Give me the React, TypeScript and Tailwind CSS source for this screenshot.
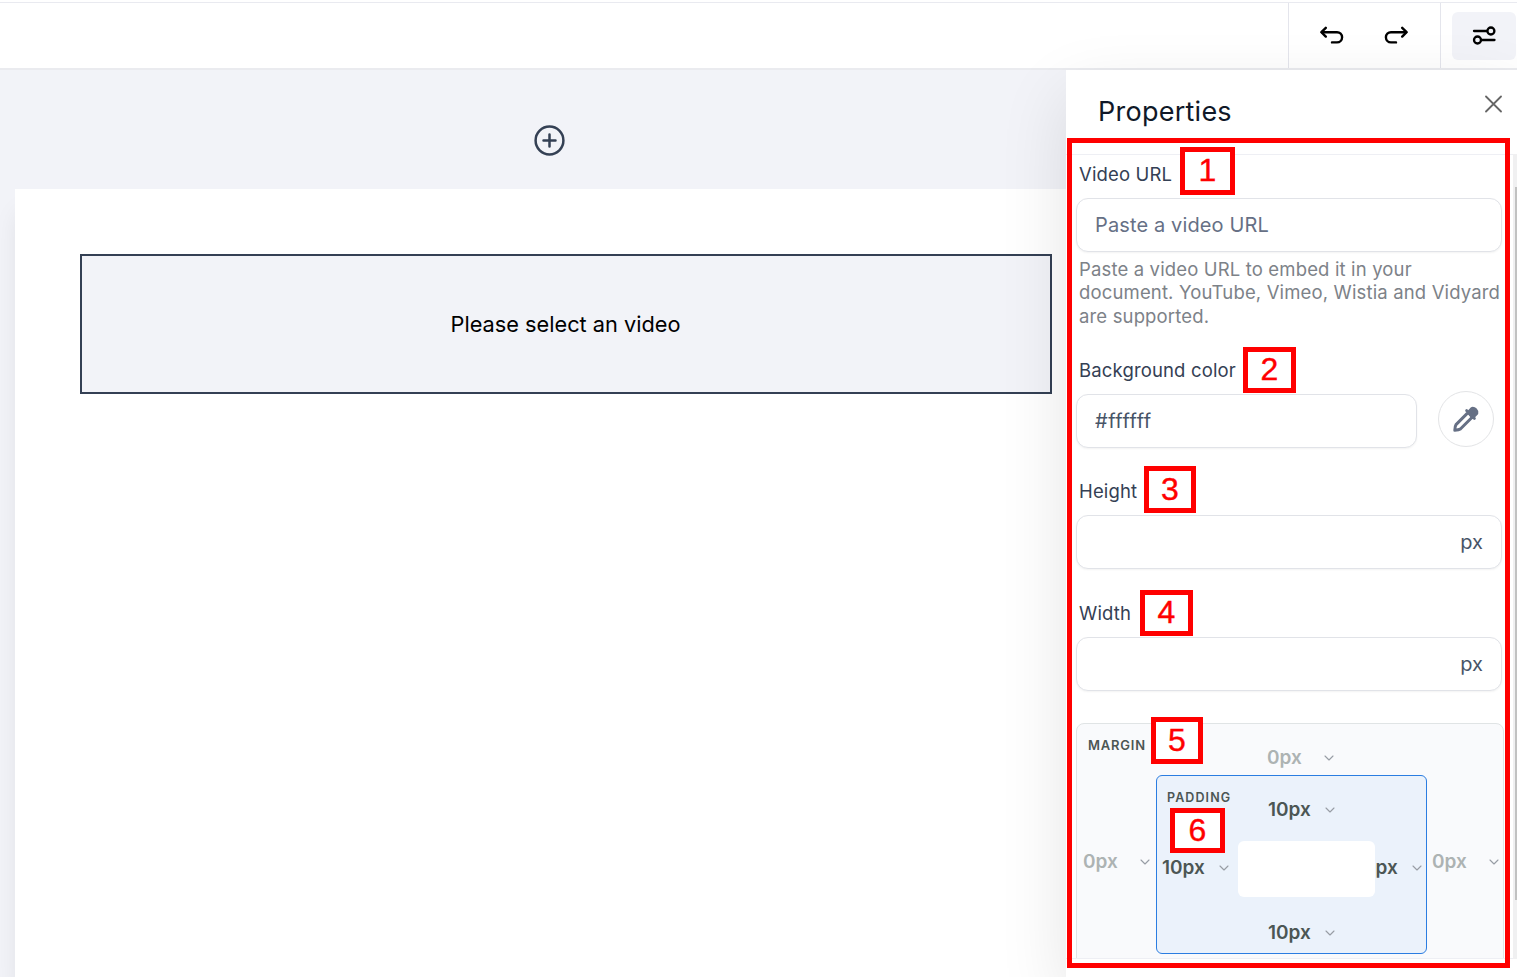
import React, { useState } from 'react';

interface Callout {
  id: number;
  box: string;
}

// Numbered callouts drawn over the properties panel
const callouts: Callout[] = [
  { id: 1, box: 'left-[1180px] top-[147px] w-[55px] h-[48px]' },
  { id: 2, box: 'left-[1243px] top-[347px] w-[53px] h-[46px]' },
  { id: 3, box: 'left-[1144px] top-[466px] w-[52px] h-[47px]' },
  { id: 4, box: 'left-[1140px] top-[590px] w-[53px] h-[46px]' },
  { id: 5, box: 'left-[1151px] top-[717px] w-[52px] h-[47px]' },
  { id: 6, box: 'left-[1170px] top-[808px] w-[55px] h-[45px]' },
];

const UndoIcon = ({ className }: { className?: string }) => (
  <svg
    viewBox="0 0 24 18"
    fill="none"
    stroke="currentColor"
    strokeWidth="2.4"
    strokeLinecap="round"
    strokeLinejoin="round"
    className={className}
  >
    <path d="M5.8 1.8 1.4 6.2 5.8 10.6" />
    <path d="M2 6.2h15a5 5 0 0 1 0 10.2H12" />
  </svg>
);

const SlidersIcon = () => (
  <svg
    width="24"
    height="20"
    viewBox="0 0 24 20"
    fill="none"
    stroke="currentColor"
    strokeWidth="2.3"
    strokeLinecap="round"
  >
    <path d="M2 5h13M9.5 14h13" />
    <circle cx="18.9" cy="5" r="3.5" />
    <circle cx="5.5" cy="14" r="3.5" />
  </svg>
);

const PipetteIcon = () => (
  <svg
    width="26"
    height="26"
    viewBox="0 0 26 26"
    fill="none"
    stroke="#667085"
    strokeWidth="3"
    strokeLinejoin="round"
    strokeLinecap="round"
  >
    <path d="M14 7.6 3 18.6Q2 20 1.8 24.2 6 24 7.4 23L18.4 12" />
    <path d="M13.6 4.6l7.8 7.8" strokeWidth="2.8" />
    <path
      d="M15.5 6.5 19 2.6a4 4 0 0 1 4.6 4.6l-4 4z"
      fill="#667085"
      strokeWidth="3.4"
    />
  </svg>
);

const Chevron = () => (
  <svg
    width="10"
    height="6"
    viewBox="0 0 10 6"
    fill="none"
    stroke="#989da5"
    strokeWidth="1.1"
    strokeLinecap="round"
    strokeLinejoin="round"
    className="shrink-0 -mt-px"
  >
    <path d="M1 1l4 4 4-4" />
  </svg>
);

interface SideValueProps {
  value: string;
  muted?: boolean;
  className?: string;
}

const SideValue: React.FC<SideValueProps> = ({ value, muted, className }) => (
  <button
    className={`flex items-center justify-between h-6 text-[19px] leading-6 font-semibold ${
      muted ? 'text-[#adb3b3]' : 'text-[#4c5654]'
    } ${className ?? ''}`}
  >
    {value}
    <Chevron />
  </button>
);

const Label = ({ children }: { children: React.ReactNode }) => (
  <label className="block h-6 pl-[3px] text-[18.5px] leading-6 tracking-[0.15px] text-[#344054]">{children}</label>
);

const fieldClass =
  'h-[54px] rounded-xl border border-[#e1e3e8] bg-white shadow-xs text-[20px] text-[#475467]';

const PixelField: React.FC<{ label: string }> = ({ label }) => {
  const [value, setValue] = useState('');

  return (
    <div>
      <Label>{label}</Label>
      <div className={`mt-3 flex items-center pl-[18px] pr-[18px] ${fieldClass}`}>
        <input
          className="flex-1 min-w-0 outline-none"
          value={value}
          onChange={(e) => setValue(e.target.value)}
        />
        <span>px</span>
      </div>
    </div>
  );
};

const SpacingEditor = () => (
  <div className="mt-8 w-[428px] h-[290px] shrink-0 rounded-t-lg border border-[#e0e4e5] bg-[#f9fafc]">
    <div className="flex h-[51px]">
      <span className="w-[190px] pl-[11px] pt-[13px] text-[13px] leading-4 font-semibold tracking-[0.8px] text-[#4c5654]">
        MARGIN
      </span>
      <SideValue value="0px" muted className="mt-[22px] w-[67px]" />
    </div>
    <div className="flex">
      <div className="w-[79px] pl-[6px] pt-[75px]">
        <SideValue value="0px" muted className="w-[67px]" />
      </div>
      <div className="w-[271px] h-[179px] rounded-md border border-[#2b7de1] bg-[#ebf2fb]">
        <div className="flex h-[65px]">
          <span className="w-[111px] pl-[10px] pt-[14px] text-[12.5px] leading-4 font-semibold tracking-[1.1px] text-[#4c5654]">
            PADDING
          </span>
          <SideValue value="10px" className="mt-[22px] w-[67px]" />
        </div>
        <div className="flex h-14">
          <SideValue value="10px" className="ml-[5px] mt-[15px] w-[67px]" />
          <div className="relative z-10 ml-[9px] w-[137px] rounded-md bg-white" />
          <SideValue value="10px" className="-ml-[20px] mt-[15px] w-[67px]" />
        </div>
        <SideValue value="10px" className="mt-[24px] ml-[111px] w-[67px]" />
      </div>
      <div className="pl-[5px] pt-[75px]">
        <SideValue value="0px" muted className="w-[67px]" />
      </div>
    </div>
  </div>
);

const PropertiesPanel = () => {
  const [url, setUrl] = useState('');
  const [color, setColor] = useState('#ffffff');

  return (
    <aside className="relative z-10 flex flex-col w-[451px] shrink-0 bg-white shadow-[0_25px_65px_rgba(0,0,0,0.11)]">
      <div className="flex justify-between h-[84px] pl-8 pr-[15px]">
        <h2 className="pt-6 text-[27px] leading-9 tracking-[0.25px] text-[#101828]">Properties</h2>
        <button className="mt-[25px] h-[17px]">
          <svg width="17" height="18" viewBox="0 0 17 18" stroke="#666" strokeWidth="1.8" strokeLinecap="round">
            <path d="M1 1.5l15 15M16 1.5L1 16.5" />
          </svg>
        </button>
      </div>

      <div className="flex h-[805px]">
        <div className="flex flex-col w-[447px] pl-[10px] border-y border-[#eeeff4] overflow-hidden">
          <div className="w-[426px] pt-[7px]">
            <Label>Video URL</Label>
            <input
              className={`mt-3 w-full px-[18px] tracking-[0.13px] outline-none placeholder:text-[#667085] ${fieldClass}`}
              placeholder="Paste a video URL"
              value={url}
              onChange={(e) => setUrl(e.target.value)}
            />
            <p className="mt-[6px] h-[71px] pl-[3px] text-[18.5px] leading-[23.4px] tracking-[0.15px] text-[#7d8288] whitespace-nowrap">
              Paste a video URL to embed it in your
              <br />
              document. YouTube, Vimeo, Wistia and Vidyard
              <br />
              are supported.
            </p>
          </div>

          <div className="mt-[29px] w-[426px]">
            <Label>Background color</Label>
            <div className="mt-3 flex items-start gap-[21px]">
              <input
                className={`w-[341px] px-[18px] tracking-[0.5px] outline-none ${fieldClass}`}
                value={color}
                onChange={(e) => setColor(e.target.value)}
              />
              <button className="-mt-[3px] -mb-2 flex items-center justify-center w-14 h-14 shrink-0 rounded-full border border-[#e3e4e6] bg-white">
                <PipetteIcon />
              </button>
            </div>
          </div>

          <div className="mt-[31px] flex flex-col gap-8 w-[426px]">
            <PixelField label="Height" />
            <PixelField label="Width" />
          </div>

          <SpacingEditor />
        </div>
        <div className="w-1 bg-[#f0f0f1]">
          <div className="mt-[33px] ml-[2px] h-[713px] bg-[#c1c1c1]" />
        </div>
      </div>
    </aside>
  );
};

const App: React.FC = () => {
  return (
    <div className="relative flex flex-col w-[1517px] h-[977px] overflow-hidden bg-white font-['Inter',sans-serif]">
      {/* Toolbar */}
      <header className="mt-[2px] flex h-[68px] shrink-0 justify-end border-t border-b-2 border-t-[#e9eaf0] border-b-[#eaebef] bg-white">
        <div className="flex items-center gap-10 w-[152px] pl-[31px] pb-px border-l border-[#e4e5ec]">
          <button>
            <UndoIcon className="w-6 h-[18px]" />
          </button>
          <button>
            <UndoIcon className="w-6 h-[18px] -scale-x-100" />
          </button>
        </div>
        <div className="w-[77px] pl-[11px] pt-[9px] border-l border-[#e4e5ec]">
          <button className="flex items-center justify-center w-16 h-12 rounded-md bg-[#f2f3f8]">
            <SlidersIcon />
          </button>
        </div>
      </header>

      <div className="flex flex-1 min-h-0">
        {/* Canvas */}
        <main className="flex flex-col flex-1 pl-[15px] bg-[#f2f3f8]">
          <div className="flex justify-center h-[119px] pt-[54px] pl-[18px]">
            <button className="w-8 h-8">
              <svg width="32" height="32" viewBox="0 0 32 32" fill="none" stroke="#344054" strokeWidth="2.5" strokeLinecap="round">
                <circle cx="15.5" cy="16.5" r="13.9" />
                <path d="M15.5 10.5v12M9.5 16.5h12" />
              </svg>
            </button>
          </div>
          <section className="flex-1 pl-[65px] pt-[65px] bg-white shadow-[0_20px_25px_-5px_rgba(0,0,0,0.1)]">
            <div className="flex items-center justify-center w-[972px] h-[140px] pr-px border-2 border-[#344054] bg-[#f2f3f8] text-[21.75px] text-black">
              Please select an video
            </div>
          </section>
        </main>

        <PropertiesPanel />
      </div>

      {/* Callouts */}
      <div className="absolute z-20 left-[1067px] top-[138px] w-[443px] h-[830px] border-5 border-[#ff0000] pointer-events-none" />
      {callouts.map((callout) => (
        <div
          key={callout.id}
          className={`absolute z-20 flex items-center justify-center pb-[2px] border-5 border-[#ff0000] bg-white text-[32px] leading-none text-[#ff0000] [-webkit-text-stroke:0.4px_#ff0000] font-['Liberation_Sans',sans-serif] ${callout.box}`}
        >
          {callout.id}
        </div>
      ))}
    </div>
  );
};

export default App;
